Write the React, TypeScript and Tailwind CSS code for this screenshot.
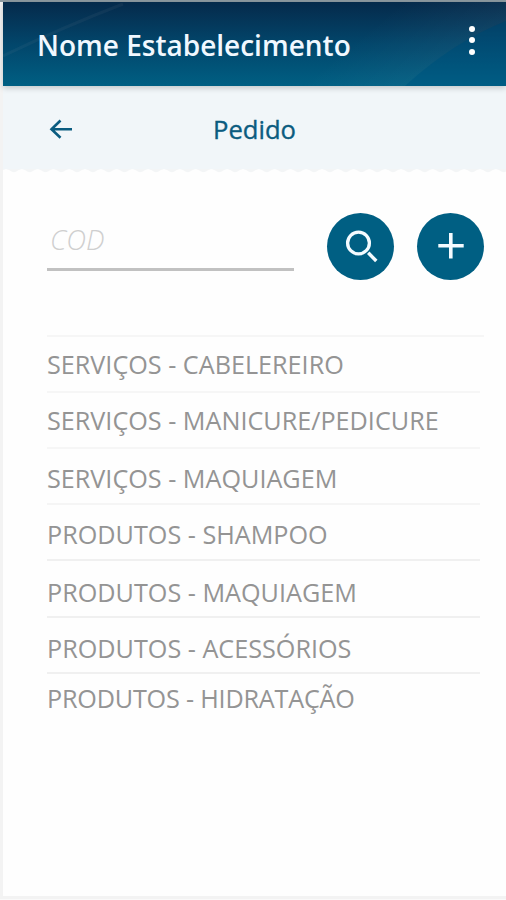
import React from "react";

type Category = {
  name: string;
  // row box: height, width, top padding and rule colour
  row: string;
};

const CATEGORIES: Category[] = [
  { name: "SERVIÇOS - CABELEREIRO", row: "h-14 w-[437px] pt-[11px] border-[#f6f6f6]" },
  { name: "SERVIÇOS - MANICURE/PEDICURE", row: "h-14 w-[433px] pt-[11px] border-[#f6f6f6]" },
  { name: "SERVIÇOS - MAQUIAGEM", row: "h-14 w-[433px] pt-[13px] border-[#f6f6f6]" },
  { name: "PRODUTOS - SHAMPOO", row: "h-14 w-[433px] pt-[13px] border-[#f5f5f5]" },
  { name: "PRODUTOS - MAQUIAGEM", row: "h-[57px] w-[433px] pt-[15px] border-[#f0f0f0]" },
  { name: "PRODUTOS - ACESSÓRIOS", row: "h-14 w-[433px] pt-3.5 border-[#f0f0f0]" },
  { name: "PRODUTOS - HIDRATAÇÃO", row: "h-14 w-[433px] pt-2 border-[#f0f0f0] tracking-[-0.2px]" },
];

function Header() {
  return (
    <header className="relative z-10 flex h-[84px] items-center justify-between bg-linear-to-b from-[#052a4b] via-[#02466b] to-[#005f83] shadow-[0_2px_6px_rgba(0,0,0,0.2)]">
      {/* Light streaks over the gradient */}
      <svg className="absolute inset-0" width="503" height="84" viewBox="0 0 503 84" fill="none">
        <defs>
          <linearGradient id="sheen" x1="0" y1="0" x2="1" y2="0.4">
            <stop offset="0.5" stopColor="#fff" stopOpacity="0" />
            <stop offset="1" stopColor="#fff" stopOpacity="0.05" />
          </linearGradient>
        </defs>
        <path d="M0 54Q60 25 120 2" stroke="#c8b8b8" strokeOpacity="0.06" strokeWidth="3" />
        <path d="M250 0H503V19Q450 40 402 84H250Z" fill="url(#sheen)" />
        <path d="M402 84Q450 40 503 19V84Z" fill="#005a88" fillOpacity="0.3" />
      </svg>
      <h1 className="relative pl-[34px] pt-0.5 text-[28px] leading-8 font-semibold whitespace-nowrap text-[#f1f8ff]">
        Nome Estabelecimento
      </h1>
      <button className="relative mr-[31px] flex flex-col gap-[5.5px] pb-2" aria-label="Menu">
        <span className="size-1.5 rounded-full bg-white" />
        <span className="size-1.5 rounded-full bg-white" />
        <span className="size-1.5 rounded-full bg-white" />
      </button>
    </header>
  );
}

function SubHeader() {
  return (
    <div>
      <div className="relative flex h-[83px] items-center justify-center bg-[#f1f6f9]">
        <button className="absolute top-[33px] left-[46px]" aria-label="Voltar">
          <svg width="24" height="20" viewBox="0 0 24 20" fill="none" stroke="#0b5c80" strokeWidth="2.6">
            <path d="M23 10.3H2.5M11.5 1.5L2.5 10.3L11.5 18.8" />
          </svg>
        </button>
        <h2 className="pt-1 text-[25.6px] leading-8 font-medium text-[#0b5c80] [-webkit-text-stroke:0.35px_#0b5c80]">
          Pedido
        </h2>
      </div>
      {/* Zigzag edge */}
      <svg className="block" width="503" height="4" viewBox="0 0 503 4">
        <defs>
          <pattern id="zigzag" x="3" width="15.8" height="4" patternUnits="userSpaceOnUse">
            <path d="M0 0H15.8Q12.5 0.6 10.3 2.5Q7.9 3.8 5.5 2.5Q3.3 0.6 0 0Z" fill="#f3f5f6" />
          </pattern>
        </defs>
        <rect width="503" height="4" fill="url(#zigzag)" />
      </svg>
    </div>
  );
}

function SearchBar() {
  return (
    <div className="flex h-[67px] pl-11">
      <div className="h-[58px] w-[247px] border-b-3 border-[#c1c1c1] pt-[11px] pl-[3px] text-[27.5px] leading-8 font-light text-[#cfcfcf] italic">
        COD
      </div>
      <button className="ml-[33px] size-[67px] rounded-full bg-[#005f83]" aria-label="Buscar">
        <svg width="67" height="67" viewBox="0 0 67 67" fill="none" stroke="#f4fbff">
          <circle cx="31.5" cy="30" r="10.9" strokeWidth="3.3" />
          <path d="M41.2 39.8L49.3 48" strokeWidth="3.4" />
        </svg>
      </button>
      <button className="ml-[23px] size-[67px] rounded-full bg-[#005f83]" aria-label="Adicionar">
        <svg width="67" height="67" viewBox="0 0 67 67" fill="none" stroke="#f4fbff" strokeWidth="3.6">
          <path d="M21.3 32.8H46.7M33.8 20V45.5" />
        </svg>
      </button>
    </div>
  );
}

export default function App() {
  return (
    <div className="flex h-[900px] w-[506px] flex-col bg-[#f3f3f3] font-['Open_Sans',sans-serif]">
      <div className="h-0.5 bg-[#8d9aa1]" />
      <div className="ml-[3px] flex h-[894px] flex-col bg-[#fefefe]">
        <Header />
        <SubHeader />
        <main className="pt-10">
          <SearchBar />
          <ul className="mt-[55px] pl-11">
            {CATEGORIES.map((item) => (
              <li
                key={item.name}
                className={`border-t-2 text-[25.2px] leading-8 whitespace-nowrap text-[#949494] ${item.row}`}
              >
                {item.name}
              </li>
            ))}
          </ul>
        </main>
      </div>
      <div className="h-1 border-b border-[#fafafa] bg-[#f3f3f3]" />
    </div>
  );
}
